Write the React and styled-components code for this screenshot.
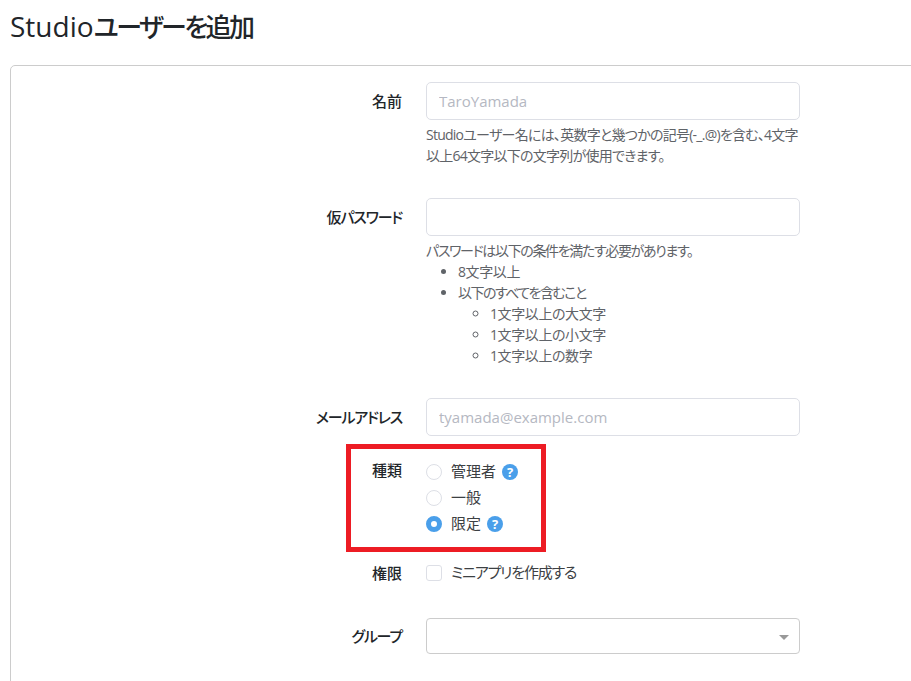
import React from "react";
import styled, { createGlobalStyle } from "styled-components";

const GlobalStyle = createGlobalStyle`
  html, body {
    margin: 0;
    padding: 0;
    height: 100%;
    overflow: hidden;
    background: #fff;
  }

  body {
    font-family: "Open Sans", "Noto Sans CJK JP", sans-serif;
    font-feature-settings: "palt";
    font-size: 15px;
    color: #212529;
  }
`;

const Page = styled.div`
  position: relative;
  width: 911px;
  height: 681px;
  padding-left: 10px;
  box-sizing: border-box;
  overflow: hidden;
`;

const Title = styled.h1`
  margin: 0;
  height: 65px;
  padding-top: 7px;
  box-sizing: border-box;
  font-size: 26px;
  line-height: 38px;
  font-weight: 500;
  letter-spacing: -2.6px;
  color: #212529;
`;

const TitleLatin = styled.span`
  font-size: 28px;
  letter-spacing: 0;
`;

const Panel = styled.div`
  width: 940px;
  height: 700px;
  padding-top: 16px;
  box-sizing: border-box;
  border: 1px solid #ccc;
  border-radius: 5px;
`;

const Row = styled.div`
  display: grid;
  grid-template-columns: 391px 374px;
  column-gap: 24px;
  margin-bottom: ${p => p.$gap || 0}px;
`;

const Label = styled.label`
  text-align: right;
  font-weight: 500;
  font-size: 15px;
  line-height: 21px;
  letter-spacing: ${p => (p.$tight ? "-1.2px" : "0")};
  padding-top: ${p => p.$top || 0}px;
  color: #212529;
`;

const Input = styled.input`
  display: block;
  width: 100%;
  height: 38px;
  padding: 0 12px;
  box-sizing: border-box;
  border: 1px solid #dddfe6;
  border-radius: 5px;
  background: #fff;
  font-family: inherit;
  font-size: 15px;

  &::placeholder {
    color: #b5b8c2;
    opacity: 1;
  }
`;

const Help = styled.div`
  margin-top: 4px;
  font-size: 14px;
  line-height: 21px;
  letter-spacing: ${p => p.$spacing || -0.4}px;
  color: #5f6368;
`;

const List = styled.ul`
  margin: 0;
  padding-left: 32px;
  letter-spacing: -0.4px;
  list-style-type: ${p => (p.$nested ? "circle" : "disc")};
`;

const TightText = styled.span`
  letter-spacing: -1.5px;
`;

const Choices = styled.div`
  display: flex;
  flex-direction: column;
`;

const Choice = styled.div`
  display: flex;
  align-items: center;
  height: 26px;
  font-size: 15px;
  letter-spacing: ${p => (p.$tight ? "-1.2px" : "0")};
  color: #3c4043;
`;

const ChoiceText = styled.span`
  padding-bottom: 3px;
`;

const Radio = styled.span`
  width: 16px;
  height: 16px;
  box-sizing: border-box;
  margin-right: 9px;
  border-radius: 50%;
  border: ${p => (p.$checked ? "5px solid #4a9fea" : "1px solid #dddfe6")};
  background: #fff;
`;

const Checkbox = styled.span`
  width: 16px;
  height: 16px;
  box-sizing: border-box;
  margin-right: 9px;
  border-radius: 3px;
  border: 1px solid #dddfe6;
  background: #fff;
`;

const HelpBadge = styled.span`
  width: 16px;
  height: 16px;
  margin-left: 6px;
  border-radius: 50%;
  background: #4a9fea;
  color: #fff;
  font-size: 13px;
  font-weight: 700;
  line-height: 16px;
  text-align: center;
`;

const Select = styled.div`
  position: relative;
  height: 36px;
  box-sizing: border-box;
  border: 1px solid #ccc;
  border-radius: 4px;
  background: #fff;

  &::after {
    content: "";
    position: absolute;
    top: 16px;
    right: 10px;
    border-style: solid;
    border-width: 5px 5px 0;
    border-color: #999 transparent transparent;
  }
`;

const Highlight = styled.div`
  position: absolute;
  left: 346px;
  top: 444px;
  width: 200px;
  height: 108px;
  box-sizing: border-box;
  border: 5px solid #ed1c24;
  pointer-events: none;
`;

export default function App() {
  return (
    <Page>
      <GlobalStyle />
      <Title>
        <TitleLatin>Studio</TitleLatin>ユーザーを追加
      </Title>
      <Panel>
        <Row $gap={32}>
          <Label $top={9}>名前</Label>
          <div>
            <Input placeholder="TaroYamada" />
            <Help $spacing={-0.75}>
              Studioユーザー名には、英数字と幾つかの記号(-_.@)を含む、4文字以上64文字以下の文字列が使用できます。
            </Help>
          </div>
        </Row>
        <Row $gap={32}>
          <Label $top={9} $tight>
            仮パスワード
          </Label>
          <div>
            <Input />
            <Help $spacing={-1.35}>
              パスワードは以下の条件を満たす必要があります。
              <List>
                <li>8文字以上</li>
                <li>
                  <TightText>以下のすべてを含むこと</TightText>
                  <List $nested>
                    <li>1文字以上の大文字</li>
                    <li>1文字以上の小文字</li>
                    <li>1文字以上の数字</li>
                  </List>
                </li>
              </List>
            </Help>
          </div>
        </Row>
        <Row $gap={23}>
          <Label $top={9} $tight>
            メールアドレス
          </Label>
          <Input placeholder="tyamada@example.com" />
        </Row>
        <Row $gap={23}>
          <Label $top={1}>種類</Label>
          <Choices>
            <Choice>
              <Radio />
              <ChoiceText>管理者</ChoiceText>
              <HelpBadge>?</HelpBadge>
            </Choice>
            <Choice>
              <Radio />
              <ChoiceText>一般</ChoiceText>
            </Choice>
            <Choice>
              <Radio $checked />
              <ChoiceText>限定</ChoiceText>
              <HelpBadge>?</HelpBadge>
            </Choice>
          </Choices>
        </Row>
        <Row $gap={32}>
          <Label $top={3}>権限</Label>
          <Choice $tight>
            <Checkbox />
            <ChoiceText>ミニアプリを作成する</ChoiceText>
          </Choice>
        </Row>
        <Row>
          <Label $top={8} $tight>
            グループ
          </Label>
          <Select />
        </Row>
      </Panel>
      <Highlight />
    </Page>
  );
}
